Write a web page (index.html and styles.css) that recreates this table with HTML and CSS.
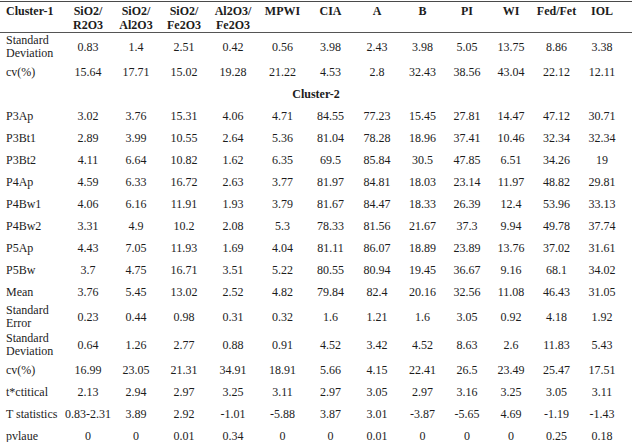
FILE: index.html
```html
<!DOCTYPE html>
<html>
<head>
<meta charset="utf-8">
<link rel="stylesheet" href="styles.css">
</head>
<body>
<table class="data">
<colgroup>
<col class="c-label"><col class="c48"><col class="c48"><col class="c48"><col class="c50"><col class="c49"><col class="c47"><col class="c46"><col class="c45"><col class="c44"><col class="c44"><col class="c47"><col class="c-last">
</colgroup>
<thead>
<tr class="head">
<th class="lab">Cluster-1</th><th>SiO2/<br>R2O3</th><th>SiO2/<br>Al2O3</th><th>SiO2/<br>Fe2O3</th><th>Al2O3/<br>Fe2O3</th><th>MPWI</th><th>CIA</th><th>A</th><th>B</th><th>PI</th><th>WI</th><th>Fed/Fet</th><th class="last">IOL</th>
</tr>
</thead>
<tbody>
<tr class="two"><td class="lab">Standard<br>Deviation</td><td>0.83</td><td>1.4</td><td>2.51</td><td>0.42</td><td>0.56</td><td>3.98</td><td>2.43</td><td>3.98</td><td>5.05</td><td>13.75</td><td>8.86</td><td class="last">3.38</td></tr>
<tr><td class="lab">cv(%)</td><td>15.64</td><td>17.71</td><td>15.02</td><td>19.28</td><td>21.22</td><td>4.53</td><td>2.8</td><td>32.43</td><td>38.56</td><td>43.04</td><td>22.12</td><td class="last">12.11</td></tr>
<tr><td class="group" colspan="13">Cluster-2</td></tr>
<tr><td class="lab">P3Ap</td><td>3.02</td><td>3.76</td><td>15.31</td><td>4.06</td><td>4.71</td><td>84.55</td><td>77.23</td><td>15.45</td><td>27.81</td><td>14.47</td><td>47.12</td><td class="last">30.71</td></tr>
<tr><td class="lab">P3Bt1</td><td>2.89</td><td>3.99</td><td>10.55</td><td>2.64</td><td>5.36</td><td>81.04</td><td>78.28</td><td>18.96</td><td>37.41</td><td>10.46</td><td>32.34</td><td class="last">32.34</td></tr>
<tr><td class="lab">P3Bt2</td><td>4.11</td><td>6.64</td><td>10.82</td><td>1.62</td><td>6.35</td><td>69.5</td><td>85.84</td><td>30.5</td><td>47.85</td><td>6.51</td><td>34.26</td><td class="last">19</td></tr>
<tr><td class="lab">P4Ap</td><td>4.59</td><td>6.33</td><td>16.72</td><td>2.63</td><td>3.77</td><td>81.97</td><td>84.81</td><td>18.03</td><td>23.14</td><td>11.97</td><td>48.82</td><td class="last">29.81</td></tr>
<tr><td class="lab">P4Bw1</td><td>4.06</td><td>6.16</td><td>11.91</td><td>1.93</td><td>3.79</td><td>81.67</td><td>84.47</td><td>18.33</td><td>26.39</td><td>12.4</td><td>53.96</td><td class="last">33.13</td></tr>
<tr><td class="lab">P4Bw2</td><td>3.31</td><td>4.9</td><td>10.2</td><td>2.08</td><td>5.3</td><td>78.33</td><td>81.56</td><td>21.67</td><td>37.3</td><td>9.94</td><td>49.78</td><td class="last">37.74</td></tr>
<tr><td class="lab">P5Ap</td><td>4.43</td><td>7.05</td><td>11.93</td><td>1.69</td><td>4.04</td><td>81.11</td><td>86.07</td><td>18.89</td><td>23.89</td><td>13.76</td><td>37.02</td><td class="last">31.61</td></tr>
<tr><td class="lab">P5Bw</td><td>3.7</td><td>4.75</td><td>16.71</td><td>3.51</td><td>5.22</td><td>80.55</td><td>80.94</td><td>19.45</td><td>36.67</td><td>9.16</td><td>68.1</td><td class="last">34.02</td></tr>
<tr><td class="lab">Mean</td><td>3.76</td><td>5.45</td><td>13.02</td><td>2.52</td><td>4.82</td><td>79.84</td><td>82.4</td><td>20.16</td><td>32.56</td><td>11.08</td><td>46.43</td><td class="last">31.05</td></tr>
<tr class="two"><td class="lab">Standard<br>Error</td><td>0.23</td><td>0.44</td><td>0.98</td><td>0.31</td><td>0.32</td><td>1.6</td><td>1.21</td><td>1.6</td><td>3.05</td><td>0.92</td><td>4.18</td><td class="last">1.92</td></tr>
<tr class="two"><td class="lab">Standard<br>Deviation</td><td>0.64</td><td>1.26</td><td>2.77</td><td>0.88</td><td>0.91</td><td>4.52</td><td>3.42</td><td>4.52</td><td>8.63</td><td>2.6</td><td>11.83</td><td class="last">5.43</td></tr>
<tr><td class="lab">cv(%)</td><td>16.99</td><td>23.05</td><td>21.31</td><td>34.91</td><td>18.91</td><td>5.66</td><td>4.15</td><td>22.41</td><td>26.5</td><td>23.49</td><td>25.47</td><td class="last">17.51</td></tr>
<tr><td class="lab">t*ctitical</td><td>2.13</td><td>2.94</td><td>2.97</td><td>3.25</td><td>3.11</td><td>2.97</td><td>3.05</td><td>2.97</td><td>3.16</td><td>3.25</td><td>3.05</td><td class="last">3.11</td></tr>
<tr><td class="lab">T statistics</td><td>0.83-2.31</td><td>3.89</td><td>2.92</td><td>-1.01</td><td>-5.88</td><td>3.87</td><td>3.01</td><td>-3.87</td><td>-5.65</td><td>4.69</td><td>-1.19</td><td class="last">-1.43</td></tr>
<tr><td class="lab">pvlaue</td><td>0</td><td>0</td><td>0.01</td><td>0.34</td><td>0</td><td>0</td><td>0.01</td><td>0</td><td>0</td><td>0</td><td>0.25</td><td class="last">0.18</td></tr>
</tbody>
</table>
</body>
</html>
```

FILE: styles.css
```css
html, body {
  margin: 0;
  padding: 0;
  background: #ffffff;
}
body {
  padding-top: 1px;
  font-family: "Liberation Serif", "Times New Roman", serif;
  font-size: 12px;
  color: #1c1c1c;
}
.data {
  width: 632px;
  border-collapse: collapse;
  table-layout: fixed;
  border-top: 1px solid #4a4a4a;
}
.c-label { width: 64px; }
.c48 { width: 48px; }
.c50 { width: 50px; }
.c49 { width: 49px; }
.c47 { width: 47px; }
.c46 { width: 46px; }
.c45 { width: 45px; }
.c44 { width: 44px; }
.c-last { width: 52px; }

.data th, .data td {
  padding: 0;
  text-align: center;
  white-space: nowrap;
}
.data th {
  font-weight: bold;
  vertical-align: top;
  line-height: 14px;
  padding-top: 2px;
  height: 28px;
  border-bottom: 1px solid #555;
}
.data td {
  height: 22px;
  line-height: 13px;
  vertical-align: middle;
}
.data .two td {
  height: 28px;
}
.data .lab {
  text-align: left;
  padding-left: 6px;
}
.data .last {
  padding-right: 8px;
}
.data .group {
  font-weight: bold;
  text-align: center;
}
```
